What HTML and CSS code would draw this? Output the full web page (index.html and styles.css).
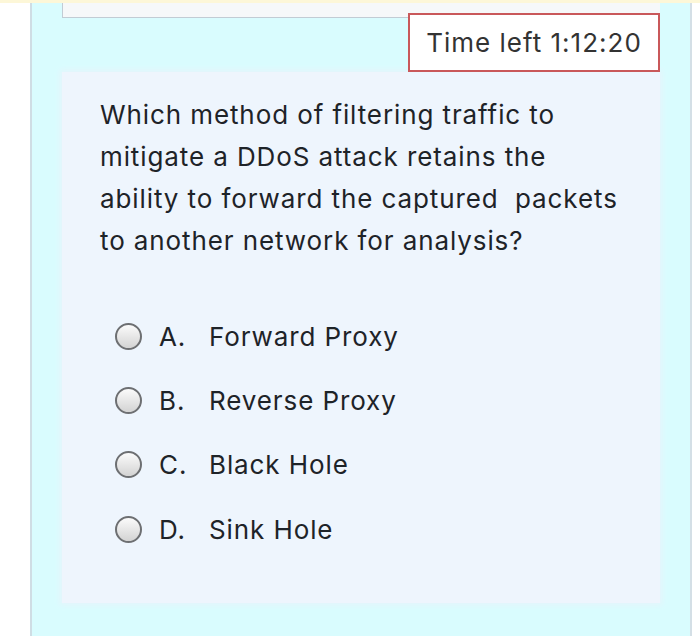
FILE: index.html
```html
<!DOCTYPE html>
<html>
<head>
<meta name="viewport" content="width=device-width, initial-scale=1.0">
<link rel="stylesheet" href="styles.css">
<title>Quiz</title>
</head>
<body>
<div class="top_strip"></div>
<div class="page">
  <div class="frame">
    <div class="prev_box"></div>
    <div class="timer_row">
      <div class="timer">Time left 1:12:20</div>
    </div>
    <div class="question_panel">
      <div class="question_text">Which method of filtering traffic to<br>mitigate a DDoS attack retains the<br>ability to forward the captured&nbsp; packets<br>to another network for analysis?</div>
      <div class="options">
        <label class="option"><span class="radio"></span><span class="letter">A.</span><span class="answer">Forward Proxy</span></label>
        <label class="option"><span class="radio"></span><span class="letter">B.</span><span class="answer">Reverse Proxy</span></label>
        <label class="option"><span class="radio"></span><span class="letter">C.</span><span class="answer">Black Hole</span></label>
        <label class="option"><span class="radio"></span><span class="letter">D.</span><span class="answer">Sink Hole</span></label>
      </div>
    </div>
  </div>
</div>
</body>
</html>
```

FILE: styles.css
```css
body {
    margin: 0;
    background-color: white;
    font-family: Inter, "Liberation Sans", Arial, sans-serif;
    color: #1e2328;
    width: 700px;
    height: 636px;
    overflow: hidden;
}

.top_strip {
    height: 3px;
    background-color: #fdf7d8;
}

.page {
    padding-left: 30px;
    padding-right: 8px;
    height: 633px;
}

.frame {
    height: 100%;
    background-color: #d9fcfe;
    border-left: 2px solid #cfdde4;
    border-right: 2px solid #d4dfe6;
    padding: 0 30px 0 30px;
}

.prev_box {
    height: 14px;
    background-color: #f6f8f9;
    border-left: 1px solid #c2ccd4;
    border-bottom: 1px solid #c2ccd4;
}

.timer_row {
    display: flex;
    justify-content: flex-end;
    margin-top: -5px;
}

.timer {
    background-color: white;
    border: 2px solid #c9585a;
    width: 252px;
    height: 59px;
    box-sizing: border-box;
    display: flex;
    align-items: center;
    justify-content: center;
    font-size: 26px;
    letter-spacing: 1px;
    color: #333;
}

.question_panel {
    background-color: #eef5fd;
    height: 531px;
    box-sizing: border-box;
    padding: 22px 20px 0 38px;
    box-shadow: 0 0 6px 2px #e6f4fb;
}

.question_text {
    font-size: 26px;
    line-height: 42px;
    letter-spacing: 0.9px;
    white-space: nowrap;
}

.options {
    margin-top: 42px;
    padding-left: 15px;
}

.option {
    display: flex;
    align-items: center;
    height: 64.4px;
    font-size: 26px;
    letter-spacing: 0.9px;
}

.radio {
    width: 23px;
    height: 23px;
    border-radius: 50%;
    border: 2px solid #6d6f72;
    background: linear-gradient(#fbfbfb, #d3d3d3);
    margin-right: 17px;
}

.letter {
    width: 50px;
}
```
